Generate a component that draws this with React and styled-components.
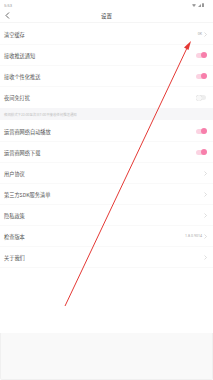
import React from "react";
import styled, { createGlobalStyle } from "styled-components";

const GlobalStyle = createGlobalStyle`
  html, body {
    margin: 0;
    padding: 0;
    background: #ffffff;
  }
  body {
    font-family: "Noto Sans CJK SC", "Noto Sans", sans-serif;
  }
`;

const Screen = styled.div`
  position: relative;
  width: 213px;
  height: 380px;
  display: flex;
  flex-direction: column;
  background: #ffffff;
  overflow: hidden;
`;

const StatusBar = styled.div`
  height: 10px;
  display: flex;
  align-items: center;
  justify-content: space-between;
  padding: 0 9px 0 4px;
  font-size: 4.2px;
  color: #999;
  font-family: "Roboto", sans-serif;
`;

const StatusIcons = styled.div`
  display: flex;
  align-items: center;
  gap: 1.5px;
`;

const Header = styled.div`
  height: 12px;
  display: flex;
  align-items: center;
  justify-content: center;
  position: relative;
  border-bottom: 1px solid #f5f5f5;
`;

const BackButton = styled.div`
  position: absolute;
  left: 5px;
  top: 2px;
  display: flex;
`;

const Title = styled.div`
  font-size: 5.5px;
  color: #444;
`;

const List = styled.div`
  display: flex;
  flex-direction: column;
  padding-top: 1px;
`;

const Row = styled.div`
  height: 21px;
  display: flex;
  align-items: center;
  justify-content: space-between;
  padding: 0 6px 0 4px;
  box-sizing: border-box;
  border-bottom: ${props => (props.last ? "none" : "1px solid #f9f9f9")};
`;

const Label = styled.div`
  font-size: 5.2px;
  color: #555;
`;

const Right = styled.div`
  display: flex;
  align-items: center;
  gap: 2px;
  font-size: 3.6px;
  color: #aaa;
  font-family: "Roboto", sans-serif;
`;

const Track = styled.div`
  position: relative;
  width: 10px;
  height: 5px;
  border-radius: 3px;
  background: ${props => (props.on ? "#fbd3e2" : "#eeeeee")};
  margin-right: 1px;
`;

const Knob = styled.div`
  position: absolute;
  top: -0.5px;
  left: ${props => (props.on ? "5px" : "0px")};
  width: 6px;
  height: 6px;
  border-radius: 50%;
  background: ${props => (props.on ? "#f77fab" : "#f8f8f8")};
  box-shadow: ${props => (props.on ? "none" : "0 0 0.5px rgba(0,0,0,0.25)")};
`;

const Notice = styled.div`
  height: 12px;
  display: flex;
  align-items: center;
  padding: 0 4px;
  background: #f6f6f8;
  font-size: 3.4px;
  color: #c0c0c0;
`;

const Spacer = styled.div`
  height: 65px;
  background: #ffffff;
`;

const Footer = styled.div`
  flex: 1;
  background: #f9f9f9;
  border: 1px solid #f0f0f0;
  border-top: none;
  border-radius: 0 0 2px 2px;
`;

const Overlay = styled.svg`
  position: absolute;
  left: 0;
  top: 0;
  pointer-events: none;
`;

const Chevron = () => (
  <svg width="3" height="5" viewBox="0 0 3 5">
    <path d="M0.5 0.5 L2.5 2.5 L0.5 4.5" fill="none" stroke="#c8c8c8" strokeWidth="0.6" />
  </svg>
);

const Switch = ({ on }) => (
  <Track on={on ? 1 : 0}>
    <Knob on={on ? 1 : 0} />
  </Track>
);

const rows1 = [
  { label: "清空缓存", value: "0K", chevron: true },
  { label: "接收推送通知", sw: true },
  { label: "接收个性化推送", sw: true },
  { label: "夜间免打扰", sw: false, last: true },
];

const rows2 = [
  { label: "运营商网络自动播放", sw: true },
  { label: "运营商网络下载", sw: true },
  { label: "用户协议", chevron: true },
  { label: "第三方SDK服务清单", chevron: true },
  { label: "隐私政策", chevron: true },
  { label: "检查版本", value: "1.8.0.9014", chevron: true },
  { label: "关于我们", chevron: true },
];

const renderRow = (r, i) => (
  <Row key={i} last={r.last ? 1 : 0}>
    <Label>{r.label}</Label>
    <Right>
      {r.value && <span>{r.value}</span>}
      {r.chevron && <Chevron />}
      {r.sw !== undefined && <Switch on={r.sw} />}
    </Right>
  </Row>
);

export default function App() {
  return (
    <>
      <GlobalStyle />
      <Screen>
        <StatusBar>
          <span>5:53</span>
          <StatusIcons>
            <svg width="4" height="3" viewBox="0 0 4 3">
              <path d="M0 0.6 Q2 -0.6 4 0.6 L2 3 Z" fill="#999" />
            </svg>
            <svg width="3" height="3" viewBox="0 0 3 3">
              <path d="M0 3 L3 0 L3 3 Z" fill="#999" />
            </svg>
            <svg width="2" height="4" viewBox="0 0 2 4">
              <rect x="0" y="0.3" width="2" height="3.7" rx="0.3" fill="#999" />
            </svg>
          </StatusIcons>
        </StatusBar>
        <Header>
          <BackButton>
            <svg width="5" height="7" viewBox="0 0 5 7">
              <path d="M4 0.5 L1 3.5 L4 6.5" fill="none" stroke="#444" strokeWidth="0.8" />
            </svg>
          </BackButton>
          <Title>设置</Title>
        </Header>
        <List>{rows1.map(renderRow)}</List>
        <Notice>夜间模式下23:00至次日7:00不接收任何推送通知</Notice>
        <List>{rows2.map(renderRow)}</List>
        <Spacer />
        <Footer />
        <Overlay width="213" height="380" viewBox="0 0 213 380">
          <line x1="65" y1="306" x2="187" y2="48" stroke="#e53935" strokeWidth="1" />
          <path d="M191 41 L188.5 50 L184 47.5 Z" fill="#e53935" />
        </Overlay>
      </Screen>
    </>
  );
}
